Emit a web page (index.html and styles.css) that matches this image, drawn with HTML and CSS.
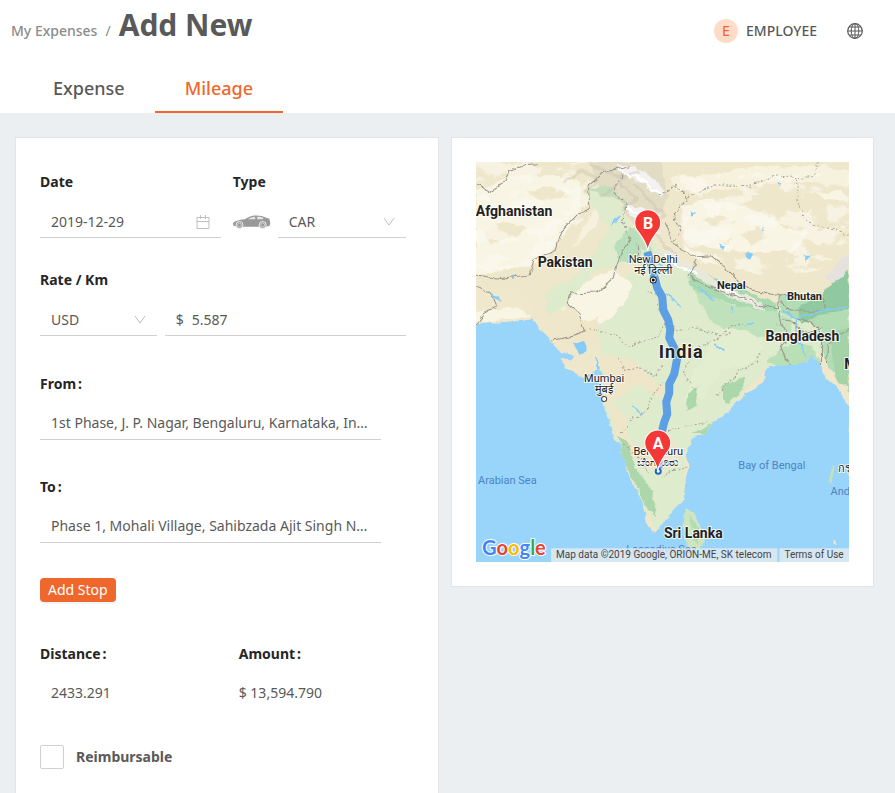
FILE: index.html
```html
<!DOCTYPE html>
<html lang="en">
<head>
<meta charset="utf-8">
<meta name="viewport" content="width=device-width, initial-scale=1">
<title>Add New Mileage</title>
<link rel="stylesheet" href="styles.css">
</head>
<body>
<header class="header">
  <div class="topbar">
    <nav class="breadcrumb" aria-label="Breadcrumb">
      <a class="crumb" href="#">My Expenses</a>
      <span class="separator">/</span>
      <h1 class="title">Add New</h1>
    </nav>
    <div class="account">
      <button class="user" type="button"><span class="avatar">E</span>EMPLOYEE</button>
      <button class="globe" type="button" aria-label="Language">
        <svg width="16" height="16" viewBox="0 0 16 16" fill="none" stroke="#595959"><circle cx="8" cy="8" r="7.3" stroke-width="1.2"/><ellipse cx="8" cy="8" rx="3.8" ry="7.3"/><path d="M8 .7v14.6M.7 8h14.6M2.2 4h11.6M2.2 12h11.6"/></svg>
      </button>
    </div>
  </div>
  <nav class="tabs" aria-label="Entry type">
    <a class="tab" href="#">Expense</a>
    <a class="tab active" href="#" aria-current="page">Mileage</a>
  </nav>
</header>
<main class="content">
  <form class="card form">
    <div class="row first">
      <div class="field date">
        <label for="date">Date</label>
        <div class="control">
          <input id="date" type="text" value="2019-12-29">
          <svg class="suffix" width="14" height="14" viewBox="0 0 14 14" fill="none" stroke="#bfbfbf"><path d="M1 2.5h12v11H1zM1 6.5h12M4.5 0v4M9.5 0v4"/></svg>
        </div>
      </div>
      <div class="field type">
        <label for="type">Type</label>
        <div class="vehicle">
          <svg class="car" width="38" height="14" viewBox="0 0 38 14"><path d="M0 8.500C.8 6.200 6 4.800 12 4.200 15 2 18 .8 21 .5c5-.4 9 .4 11.500 2l4 1.300.8 4.200-.8 3-4 .8H4L.3 10.500z" fill="#999"/><path d="M15 4.300c2-1.400 4-2.300 7-2.500l.4 2.500zM24 1.800c2.500-.1 5 .4 6.500 1.300l-.6 1.200h-5.500z" fill="#e6e6e6"/><g fill="#999" stroke="#fff" stroke-width=".8"><circle cx="6.500" cy="10" r="3.500"/><circle cx="29.700" cy="10" r="3.500"/></g><g fill="none" stroke="#d5d5d5" stroke-width=".8"><circle cx="6.500" cy="10" r="1.900"/><circle cx="29.700" cy="10" r="1.900"/></g></svg>
          <div class="control select">
            <select id="type"><option>CAR</option></select>
            <svg class="suffix" width="12" height="12" viewBox="0 0 12 12" fill="none" stroke="#bfbfbf"><path d="m1 2 5 7 5-7"/></svg>
          </div>
        </div>
      </div>
    </div>
    <div class="field rate">
      <label for="rate">Rate / Km</label>
      <div class="amount">
        <div class="control">
          <select aria-label="Currency"><option>USD</option></select>
          <svg class="suffix" width="12" height="12" viewBox="0 0 12 12" fill="none" stroke="#bfbfbf"><path d="m1 2 5 7 5-7"/></svg>
        </div>
        <div class="control value"><span class="prefix">$</span><input id="rate" type="text" value="5.587"></div>
      </div>
    </div>
    <div class="field place">
      <label class="colon" for="from">From</label>
      <div class="control"><input id="from" type="text" value="1st Phase, J. P. Nagar, Bengaluru, Karnataka, India"></div>
    </div>
    <div class="field place">
      <label class="colon" for="to">To</label>
      <div class="control"><input id="to" type="text" value="Phase 1, Mohali Village, Sahibzada Ajit Singh Nagar"></div>
    </div>
    <button class="add" type="button">Add Stop</button>
    <dl class="totals">
      <div><dt class="colon">Distance</dt><dd class="inset">2433.291</dd></div>
      <div><dt class="colon">Amount</dt><dd>$ 13,594.790</dd></div>
    </dl>
    <label class="check"><input type="checkbox">Reimbursable</label>
  </form>
  <section class="card" aria-label="Route map">
    <svg class="map" viewBox="0 0 373 400" preserveAspectRatio="xMidYMid slice">
      <defs>
        <filter id="rough" x="-5%" y="-5%" width="110%" height="110%"><feTurbulence type="fractalNoise" baseFrequency=".09" numOctaves="3" seed="4"/><feDisplacementMap in="SourceGraphic" scale="7" xChannelSelector="R" yChannelSelector="G"/></filter>
        <filter id="patches" x="0" y="0" width="100%" height="100%"><feTurbulence type="fractalNoise" baseFrequency=".035 .06" numOctaves="4" seed="8"/><feColorMatrix values="0 0 0 0 .975  0 0 0 0 .96  0 0 0 0 .89  14 0 0 0 -7.300"/><feComposite in2="SourceGraphic" operator="in"/></filter>
        <clipPath id="land"><path id="coast" d="M-10-10H383V250L373 243 367 236 361 225 349 216 344 201 336 193 331 200 326 201 317 203 302 203 296 205 289 208 287 220 274 228 262 238 251 250 237 261 227 273 216 276 211 285 212 305 209 321 207 338 199 345 192 355 184 365 178 370 171 362 166 340 157 323 149 303 144 285 137 275 132 255 127 235 126 215 122 200 119 210 107 216 94 208 84 196 93 197 98 193 86 191 76 181 72 175 62 165 56 157 31 161 14 160-10 163z"/></clipPath>
      </defs>
      <rect width="373" height="400" fill="#99d5fb"/>
      <g filter="url(#rough)">
        <use href="#coast" fill="#efe7cb"/>
        <path d="M209 346 217 350 229 371 226 385 219 388 211 385 207 365z" fill="#cfe5c0"/><path d="M214 352 224 368 220 384 216 374z" fill="#b4dcb4"/>
        <g clip-path="url(#land)">
          <path d="M0 30 33 15 70 13 105 20 102 55 82 80 60 102 0 114z" fill="#f8f5e4"/>
          <path d="M0 126 28 126 51 128 55 158 0 164z" fill="#f0e8cc"/>
          <path d="M0 150 40 145 56 154 28 158 0 160z" fill="#f8f5e4"/>
          <path d="M82 115 98 82 113 55 127 40 115 80 120 105 99 125 86 150z" fill="#f6f1dc"/>
          <path d="M110 30 134 26 150 54 156 80 145 105 118 108 96 140 76 151 68 133 83 117 121 83 134 68 120 50z" fill="#dfebcd"/>
          <path d="M90 92 122 62 132 70 118 92 96 118 78 124z" fill="#efe7cb"/>
          <path d="M138 84 154 66 172 68 183 96 164 103 143 100z" fill="#b9dfba"/>
          <path d="M164 70 190 90 220 115 253 134 288 144 319 135 373 130V220L340 190 290 207 230 270 209 290 207 337 181 370 160 328 128 246 124 180 110 162 137 133 150 112 164 108z" fill="#dfebcd"/>
          <path d="M112 118 138 108 158 124 136 157 110 165 91 139z" fill="#f8f5e4"/>
          <path d="M126 193 163 201 188 210 187 233 157 245 147 260 158 287 194 274 204 295 185 312 161 299 143 277 130 240z" fill="#efe5c9"/>
          <path d="M135 240 165 222 188 240 170 262 148 254zM158 200 182 196 196 214 184 224z" fill="#dfebcd"/>
          <path d="M240 170 275 160 286 185 273 204 246 207 228 235 208 239 216 214z" fill="#e3edd0"/>
          <path d="M213 104 240 116 277 132 300 140 300 153 265 145 221 132 212 123z" fill="#a9d9ae"/>
          <path d="M218 128 255 143 301 151 315 157 315 170 286 176 259 167 237 163 226 146z" fill="#bfe2bd"/>
          <path d="M302 133 328 131 350 132 373 107V225L350 202 344 184 345 165 320 158 304 151z" fill="#b2dcb3"/>
          <path d="M344 135 362 113 373 110V148L348 151 325 163 321 146z" fill="#90c9a0"/>
          <path d="M313 180 335 185 345 200 304 207 290 201z" fill="#b9dfb6"/>
          <path d="M353 170 373 165V230L358 213z" fill="#a3d3a7"/>
          <path d="M212 232 222 224 219 245 210 250zM245 225 268 214 268 227 251 243zM216 272 240 259 229 272z" fill="#acd7aa"/>
          <path d="M142 274 150 278 159 303 175 328 181 355 168 343 157 318 147 298z" fill="#add7aa"/>
          <path d="M68 145 88 128 102 120 93 134 76 154z" fill="#dcebcc"/>
          <path d="M104 160 122 154 123 178 111 187 90 184 78 175 96 169z" fill="#efe5c8"/>
          <path d="M206 45 233 37 280 47 310 67 332 70 320 88 276 91 233 86 207 78z" fill="#f8f5e4"/>
          <path d="M193 16 230 14 275 5 350 4 373 10V25L330 20 288 22 246 28 202 30z" fill="#f7f2de"/>
          <g fill="#f8f5e4"><path d="M340 31 365 29 371 39 346 37zM207 82 228 94 245 105 221 99 207 90zM278 13 302 12 316 18 290 18z"/></g>
          <g fill="#efe7cb"><path d="M226 58 244 52 258 60 240 66zM262 72 282 66 296 76 276 82zM240 78 256 76 250 84zM6 70 30 60 52 66 40 74 14 82zM50 30 76 24 92 34 66 40z"/></g>
          <path d="M111 0H184L192 35 180 60 155 63 145 40 126 31z" fill="#e2dcc4"/>
          <path d="M111 29 139 36 160 58 163 86 179 95 167 69 153 45 132 23z" fill="#c5ddbb"/>
          <path d="M140 3 156 4 171 12 190 29 185 36 165 20 148 11zM148 42 167 47 181 62 184 75 171 64 155 54z" fill="#f4f2f0"/>
          <path d="M177 85 203 102 230 121 259 138 289 149 285 139 254 128 225 108 190 89z" fill="#e8e9da"/>
          <path d="M351 113 364 98 373 92V109L356 121z" fill="#e5e1dc"/>
          <path d="M0 0H125L105 60 60 105 0 110zM205 10H373V85L340 110 280 112 230 98 205 78z" filter="url(#patches)" opacity=".6"/>
          <g fill="none" stroke="#c4bda8" stroke-width="3" opacity=".35"><path d="M87 20 107 9 122 18 109 31M125 35 144 22 159 36 145 48M158 21 177 42 188 54 171 78M113 3 144 15 163 10M177 70 190 87 202 94"/></g>
          <g fill="none" stroke="#fff" stroke-width="2"><path d="M143 7 153 15 162 14 174 27 185 32M151 47 162 51 171 61 181 65M188 92 200 103 221 112M247 125 265 137 281 142"/></g>
        </g>
        <g fill="#83ccfa"><path d="M12 127 27 140 16 137zM36 113 39 118 36 119zM98 181 108 179 111 188 103 192zM268 91 276 93 273 98 268 95zM326 95 335 95 329 100zM244 82 250 84 246 87zM301 20 305 22 302 24zM286 66 289 68 286 70zM214 50 221 52 216 55z"/></g>
      </g>
      <g filter="url(#rough)" fill="none" stroke="#99948a" stroke-width="1">
        <path d="M0 24 12 30 29 19 33 9 48 4 60 3M0 114 20 117 54 113 58 98 80 88 85 70 101 53 114 48 112 24 129 10 153 4M155 76 144 92 138 115 121 130 94 131 91 142 104 153 109 170 95 175 75 178M0 124 13 130 20 145 8 152 0 163M189 60 196 77 205 88 222 96 236 95 252 108 262 120 277 128 304 134M211 113 220 98M211 113 226 122 264 136 283 143 301 147 302 133M304 134 324 133 348 136 346 149 312 149 304 139M303 150 306 165 314 173 305 184 313 203M307 158 320 160 323 170 346 166M321 157 342 164 345 179 345 204M350 202 351 183 373 166"/>
        <g stroke-dasharray="3 2"><path d="M154 76 146 60 151 44 138 32 145 12M183 34 199 22 212 37 197 52 205 68 199 78M159 81 163 101 180 95"/></g>
        <g stroke="#aaa697" stroke-dasharray="2 2"><path d="M212 34 240 23 273 24 301 12 318 16 336 15 342 0M320 17 322 43 328 59 352 66 373 74M113 167 138 171 151 184 181 175 193 151 185 137 170 127M142 196 149 208 164 206 180 214 187 204M146 272 152 258 169 251 178 230 187 218M181 144 199 169 222 166 243 174 255 164 267 161M186 315 202 307 211 303M172 309 166 298 144 281M187 271 210 263 231 259M220 228 207 213 217 190 236 179 254 170M240 234 262 210 277 202 286 190M300 161 315 171 336 170"/></g>
      </g>
      <g filter="url(#rough)" fill="none" stroke="#83ccfa" stroke-width="1.500"><path d="M305 149 319 157 345 149 371 145M319 157 320 178 330 194M136 64 144 54M189 132 205 143M222 126 238 139M255 144 257 151M180 99 193 111M268 163 279 161M119 196 124 205M156 244 168 253M238 183 248 188"/></g>
      <g fill="#c3dfbc"><path d="m356 303 2 1-3 18-3-2z"/><path d="M373 262v6l-2 2z"/></g><path d="m357 377 2 2 1 4-3-2z" fill="#eee8d1"/>
      <path d="M171 90 174 100 178 114 181 126 186 135 187 148 192 158 194 168 193 176 198 186 201 196 198 212 193 222 193 231 190 240 191 252 188 260 184 276" fill="none" stroke="#5d9fe4" stroke-width="8" stroke-linejoin="round"/>
      <path d="M185 298 184 306" stroke="#5d9fe4" stroke-width="4"/>
      <circle cx="182" cy="309" r="2.500" fill="#fff" stroke="#1769c6" stroke-width="2"/>
      <g class="place-label city"><text x="177" y="101">New Delhi</text><text x="177" y="112">नई दिल्ली</text><text x="128" y="220">Mumbai</text><text x="128" y="231">मुंबई</text><text x="182" y="293">Bengaluru</text><text x="182" y="304">ಬೆಂಗಳೂರು</text></g>
      <circle cx="177" cy="118" r="3" fill="#fff" stroke="#222"/><circle cx="177" cy="118" r="1.500"/><circle cx="128" cy="237" r="2.500" fill="#fff" stroke="#444"/>
      <g class="place-label country"><text x="38" y="54">Afghanistan</text><text x="89" y="105">Pakistan</text><text x="326" y="179">Bangladesh</text><text x="217" y="376">Sri Lanka</text></g>
      <text class="place-label india" x="205" y="196">India</text>
      <g class="place-label small"><text x="255" y="127">Nepal</text><text x="328" y="138">Bhutan</text></g>
      <g class="place-label country"><text x="374" y="207">M</text><text x="374" y="221">(</text></g>
      <g class="sea"><text x="2" y="322">Arabian Sea</text><text x="262" y="307">Bay of Bengal</text><text x="354" y="333">And</text><text x="150" y="391">Laccadive Sea</text></g><text class="place-label city" x="371" y="310">กรุง</text>
      <g fill="#f43836" stroke="#fff"><path d="M171.500 89c-1-8-5-13-9.200-18.800a13 13 0 1 1 18.400 0c-4.200 5.800-8.200 10.800-9.200 18.800z"/><path d="M181.500 309c-1-8-5-13-9.200-18.800a13 13 0 1 1 18.400 0c-4.200 5.800-8.200 10.800-9.200 18.800z"/></g>
      <g class="pin"><text x="172" y="67">B</text><text x="182" y="287">A</text></g>
      <text class="google" x="6" y="393"><tspan fill="#4285f4">G</tspan><tspan fill="#ea4335">o</tspan><tspan fill="#fbbc05">o</tspan><tspan fill="#4285f4">g</tspan><tspan fill="#34a853">l</tspan><tspan fill="#ea4335">e</tspan></text>
      <path d="M75 386H301V400H75zM303 386H373V400H303z" fill="#e6ebf0" opacity=".8"/>
      <g class="credits"><text x="80" y="396">Map data ©2019 Google, ORION-ME, SK telecom</text><text x="308" y="396">Terms of Use</text></g>
    </svg>
  </section>
</main>
</body>
</html>
```
FILE: styles.css
```css
* { box-sizing: border-box; }
body {
  display: flex;
  flex-direction: column;
  min-height: 100vh;
  margin: 0;
  background: #ebeff2;
  color: #595959;
  font: 14px/22px "Noto Sans", sans-serif;
}
input, select, button { color: inherit; font: inherit; }
button { padding: 0; border: 0; background: none; cursor: pointer; }
a { color: inherit; text-decoration: none; }

.header { background: #fff; }
.topbar { display: flex; justify-content: space-between; align-items: center; height: 62px; padding: 0 32px 0 11px; }
.breadcrumb { display: flex; align-items: baseline; gap: 8px; padding-bottom: 12px; color: #8c8c8c; }
.crumb { font-weight: 500; }
.title { margin: 0; color: #595959; font-size: 30px; line-height: 38px; font-weight: 700; }
.account { display: flex; align-items: center; gap: 30px; }
.user { display: flex; align-items: center; gap: 8px; font-weight: 500; }
.avatar { width: 24px; border-radius: 50%; background: #ffdcc8; color: #f5632d; line-height: 24px; font-weight: 400; }
.globe { display: flex; }
.tabs { display: flex; padding-left: 23px; }
.tab { padding: 14px 30px 10px; border-bottom: 2px solid transparent; font-size: 18px; line-height: 25px; font-weight: 500; }
.active { border-color: #f0672e; color: #f0672e; }

.content { display: grid; grid-template-columns: repeat(2, minmax(0, 1fr)); gap: 12px; flex: 1; align-items: start; padding: 24px 21px 0 15px; }
.card { padding: 24px; border: 1px solid #e2e5e8; background: #fff; }
.form { display: flex; flex-direction: column; align-items: stretch; align-self: stretch; padding: 33px 32px 24px 24px; border-bottom: 0; }
.row { display: flex; gap: 12px; }
.field { display: flex; flex-direction: column; gap: 13px; min-width: 0; }
.field > label, dt { color: #262626; font-weight: 700; }
.colon::after { content: ":"; margin-left: 2px; }
.first { margin-bottom: 31px; }
.date { flex: 181; }
.type { flex: 173; }
.vehicle { display: flex; align-items: center; gap: 7px; }
.car { flex: none; }
.control { position: relative; display: flex; flex: 1; align-items: center; min-width: 0; border-bottom: 1px solid #d0d0d0; }
.control input, .control select {
  flex: 1;
  width: 100%;
  min-width: 0;
  height: 31px;
  padding: 0 11px;
  border: 0;
  outline: 0;
  background: transparent;
  appearance: none;
  text-overflow: ellipsis;
}
.suffix { position: absolute; right: 11px; pointer-events: none; }
.rate { margin-bottom: 37px; }
.amount { display: grid; grid-template-columns: 117fr 241fr; gap: 8px; }
.value { padding-left: 11px; }
.control .prefix + input { padding-left: 8px; }
.place { margin: 0 25px 36px 0; }
.place .control input { padding: 0 11px 2px; }
.add { align-self: flex-start; height: 24px; margin-top: -1px; padding: 0 8px; border-radius: 4px; background: #f0672e; box-shadow: 0 2px 0 rgba(0, 0, 0, .04); color: #fff; }
.totals { display: grid; grid-template-columns: 199fr 167fr; margin: 41px 0; }
.totals dd { margin: 17px 0 0; }
.totals .inset { padding-left: 11px; }
.check { display: flex; align-items: center; align-self: flex-start; gap: 12px; font-weight: 700; }
.check input { width: 24px; height: 24px; margin: 0; border: 1px solid #d0d0d0; border-radius: 2px; appearance: none; }

.map { display: block; width: 100%; height: 400px; font-family: Roboto, "Noto Sans", sans-serif; }
.place-label { fill: #222; stroke: #fff; stroke-width: 2px; stroke-opacity: .8; stroke-linejoin: round; paint-order: stroke; text-anchor: middle; }
.city { font-size: 11px; }
.country { font-size: 14px; font-weight: 700; }
.small { font-size: 11px; font-weight: 700; }
.india { font-size: 18px; font-weight: 700; letter-spacing: 1px; }
.sea { fill: #4b83c4; font-size: 11px; }
.pin { fill: #fff; font-size: 16px; font-weight: 700; text-anchor: middle; }
.google { stroke: #fff; stroke-width: 2px; stroke-linejoin: round; paint-order: stroke; font: 700 20px Lato, sans-serif; }
.credits { fill: #444; font-size: 10px; }
```
